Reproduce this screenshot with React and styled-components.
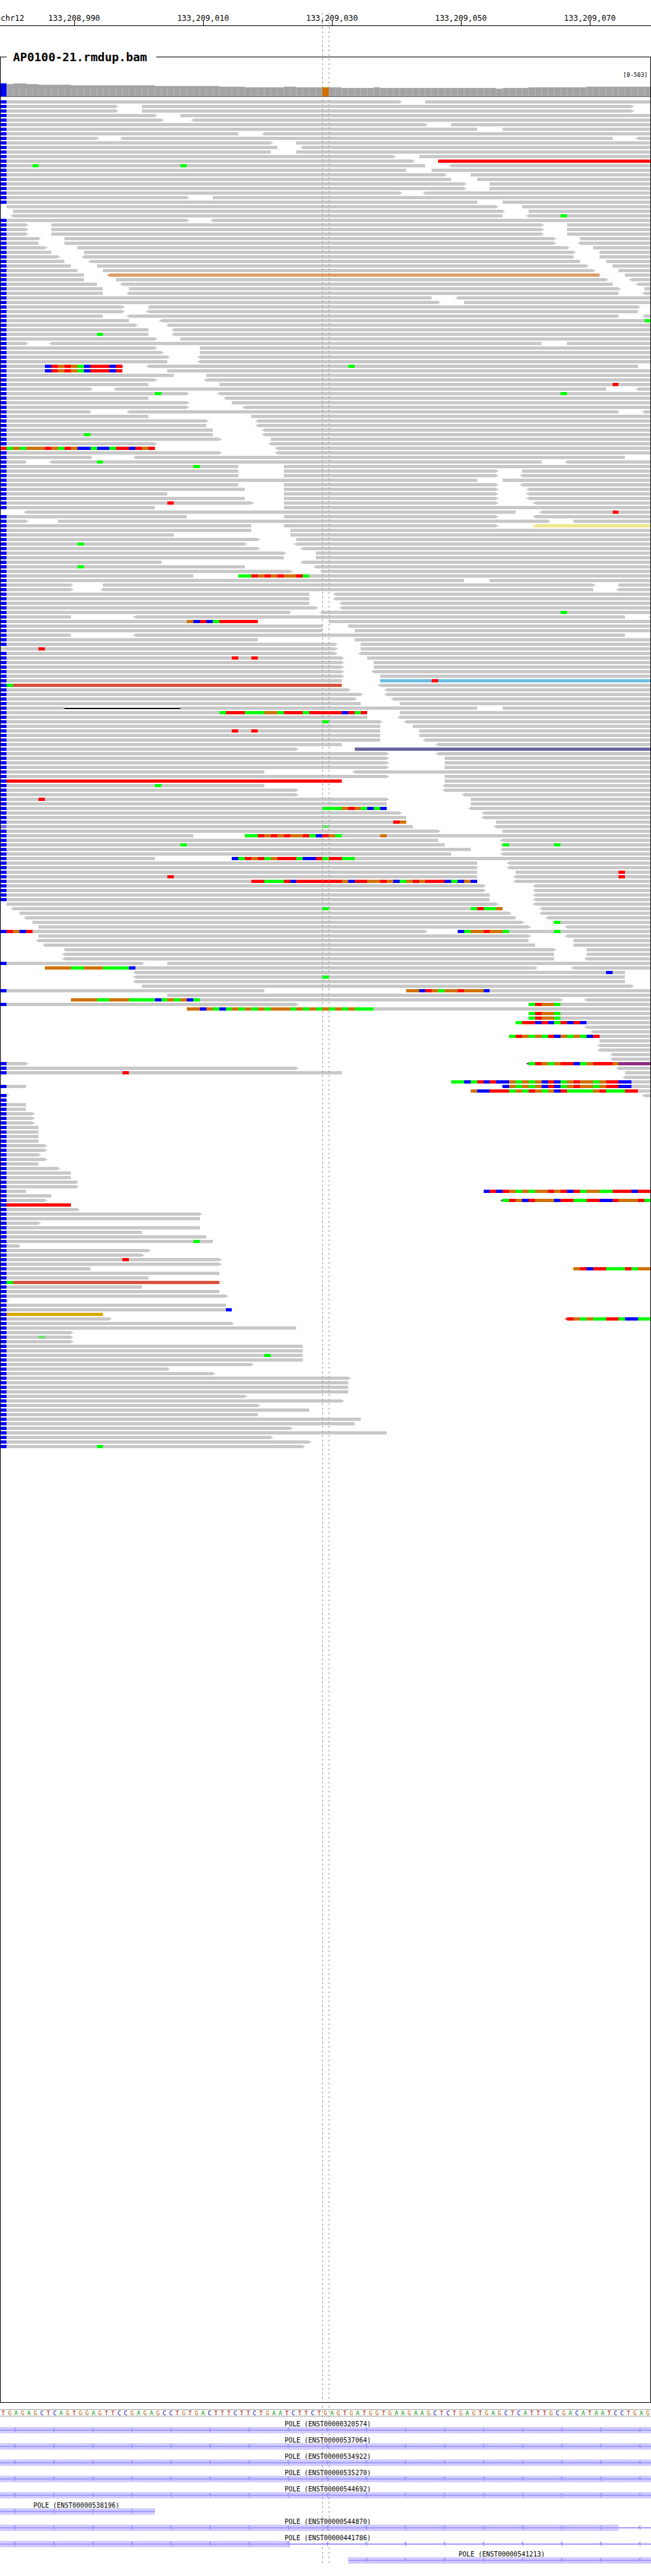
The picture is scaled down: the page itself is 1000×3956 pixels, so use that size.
import React from "react";
import styled, { createGlobalStyle } from "styled-components";

const BASES = 101;
const ROW = 7;
const ROW_CAPACITY = 505;
const pct = (base) => `${(base / BASES) * 100}%`;

const SEQUENCE =
  "TGAGAGCTCAGTGGAGTTCCGAGAGCCTGTGACTTTCTTCTGAATCTTCTGAGTGATGGTGAAGAAGCTCTGAGTGAGCTCATTTGCGACATAATCCTGAG";

const MISMATCH = { A: "#00ff00", C: "#0000ff", G: "#d17105", T: "#ff0000" };
const LETTER = { A: "#009600", C: "#0000b0", G: "#b06000", T: "#b00000" };
const PAIR = {
  red: "#ff0000",
  tan: "#dc9e68",
  yellow: "#f0e68c",
  sky: "#6bbde3",
  rust: "#d9513a",
  indigo: "#66669f",
  purple: "#8c2d82",
  gold: "#d9a900",
};

// One line per row. "a-b" is a read from base a to base b (b empty: to the edge),
// "<" and ">" are strand arrows, "C" in front means a C mismatch at base 0,
// "#name" colours the read, "@nXYZ" lists mismatches, "~" makes them faint.
const READS = `C62> 66-
C18> 22-98>
C18> 22-98>
C24> 28-
C25> <30-
C66> 70-
C74 78-
C37 <41-
C15> <19-95 <99-
C42> 46-
C43 <47-
C42 46-
C61> 65-
C64> 68-#red
C66 <70- @5A @28A
C63 67-
C69> 73-
C70 74-
C72> 76-
C72> 76-
C62> <66-
C29> 33-
C74 78-
1-77> 81-
2-78> 82-
<2-78 <82- @87A
C29> <33-
C4> 8-84> 88-
C4> 8-84> 88-
C4> 8-84> 88-
C6> 10-86> 90-
C6 10-86> <90-
C7> 12-88> 92-
C8 13-89> 93-
C9> <13-89 93-
C10 <14-90 94-
C11 15-91> 95-
C12 16-92> 96-
C13 <17-93#tan 97-
C13 18-94> <98-
C15 <19-95 <99-
C16 20-96> 100-
C16 <20-96 <100-
C67 <71-
C68> 72-
C19> 23-99>
C19> <23-99
C16 <20-96 <100-
C20 <25- @100A
C21> 26-
C23 <27-
C23 <27- @15A
C24> 28-
C4> <8-84 88-
C24> 31-
C25> 31-
C26> <31-
C26 <31-
C19> <23-99 @7CTGTGACTTTCT @54A
C19 26- @7CTGTGACTTTCT
C27 32-
C24> <32-
C23 34- @95T
C14> <18-94 <99-
C29> <34- @24A @87A
C23 <35-
C29> 36-
C29> <38-
C14 <20-96 <100-
C23 39-
C32> <40-
C32 <40-
C33 <41-
C33 <41- @13A
C34> 42-
C24> <42-
0-24 <43- @0TAGAGGGTGATGCCACCATTCTGT
C34> <43-
C14> <21-97
C4 <8-84 <88- @15A
C37 44- @30A
C37 44-77> 81-
C37 44-77> <81-
C74 78-
C37 44-77> <81-
C38 44-77> <82-
C26 44-77> <82-
C38 44-77> <82-
C39> 44-77> <83- @26T
C24 44-
<4-80 <84- @95T
C29 44-77> <83-
C4> 9-85> 89-
C39 44-77> <83-#yellow
C39 45-
C27 45-
C40> 46-
C38> <46- @12A
C40> <47-
C44> 49-
C44 49-
C25 <47-
C38 <49- @12A
C45> <50-
C30 37- @37AATGTGTGGTA
C72 76-
C11> 16-92> 96-
C11> <16-92 <96-
C48 <52-
C48 <52-
C48 <53-
C49> <53-
C45 <50- @87A
C11 <21-97 <101-
C40 51- @29GCTCATTTTTT
C50 54-
C50 55-
C11 <21-97
C40 55-
C52> 56-
0-52> 56- @6T
C52> <56-
C53> 57- @36T @39T
C53> 58-
C53> 58-
C53> <58-
C53> 59-
C53 59-#sky @67T
C53#rust <59- @1A
C54> <60-
C56> <60-
C55> <61-
C56 62-
C10 28-74 78- =10-28
C57 62- @34ATTTAAAGGATTTATTTTTCTAT
C57 <62-
C59> <63- @50A
C59 64-
C59 65- @36T @39T
C59 65-
C59 <66-
C53 <68-
C46> 55-#indigo
C60> <68-
C60> 69-
C60> 69-
C60> 69-
C41 <55-
C60> 69-
C53#red 69-
C41 <69- @24A
C46> <69-
C46> <72-
C60> 73- @6T
C60 73-
C60 <73- @50AAAGTGACAC
C62> <75-
C63 <75-
C63 77- @61TG
0-64 <77- ~0C ~50A
C68> 78-
C30 38- @38AATGTGTGGTACTGA @59G
C68 <78-
C69 <78- @28A @78A @86A
C73 <78-
C70 <78-
C24 36- @36CATGTAGTTTACCTATTAA
C74 <79-
C74 <79-
C74 80- @96T
C74 <80- @26T @96T
C74 <80- @39TTAAATCTTTTTTTGCTTGGTGCAGTGTTTCACGC
C75> <83-
C75> <83-
C76 <83-
C76 <83-
1-77> <83-
<2-78 <84- @50A @73ATAAG
3-79> <84-
<4-80 <85-
5-81> <86- @86A
6-82> <88-
C66> 71- @1TGCT @71CAGGTGGA @86A
6-82> <88-
<6-82 89-
<7-83 89-
10-86> 91-
<10-86 91-
<10-86 <91-
C22> 26-
7-83> <89- @7GGGGAAGGGAAAAC
<21-97 @94C
<21-97 @50A
<21-97
22-98>
C41 63- @63GGCTGAGGTGGGC
26-
11-87> <91- @11GGGGAAGGGAAAACAGAGCA
C46> 82- @82ATGGA
29- @29GGCGACAGAGAGAGGGAGAGAGAGAGAAA
82- @82ATGGA
<82- @82ATGGA
80- @80ATTCTCATCTC
<91-
<92-
79- @79ATGAGATCGAGACT
93-
<93-
<93-
<95-
<95-
C4> <82-#purple @82ATGAGTTCAGTTTG
C46> <96-
C53 97- @19T
<97-
70- @70AACATCTCCGAGAGCTCAGTGGAGTTCC
C4 <78- @78CGAGAGCTCAGTGGAGTTCC
73- @73GCCTTTAGATGAGCTAAAAGTAAATT
C1> <100-
C1
C4
C4
C5>
C5>
C5>
C6
C6
C6
C6
C7>
C7>
C6>
C7>
C6
C9>
C11
C11
C12
C12
C4 75- @75CTCTGAGAGGTGTCTAGGAATTTCTT
C8
C7> <78-#indigo @78ATGCTGGGCTTAATTCCTGGGTA
C11#red
C12>
C31>
C31
C6>
C31
C22
C32
C33 @30A
C3
C23>
C22>
C34> @19T
C34>
C14 <89-#yellow @89GTCTTAAATAGG
C34
C23
C34#rust @1A
C22
C34
C35>
C1>
C35
C36 @35C
C16#gold
C17> <88-#rust @88TGAGAATTACCAA
C36>
C46
C11>
C11> ~6A
C11>
C47
C47
C47 @41A
C47
C39>
C26>
C33>
C54>
C54
C54
C54
C38>
C53>
C40>
C48
C40
C56
C55
C45>
C60
C42>
C48>
C47> @15A`.split("\n");

// [first base, height of the column in px]
const COVERAGE_STEPS = [
  [0, 20], [1, 19], [2, 20], [4, 19], [6, 18], [11, 17], [24, 16], [34, 15],
  [38, 14], [44, 15], [46, 14], [53, 13], [58, 14], [59, 13], [77, 12],
  [78, 13], [82, 14], [91, 15], [101, 0],
];

const GENES = [
  { id: "ENST00000320574", to: 101, exonTo: 101 },
  { id: "ENST00000537064", to: 101, exonTo: 101 },
  { id: "ENST00000534922", to: 101, exonTo: 101 },
  { id: "ENST00000535270", to: 101, exonTo: 101 },
  { id: "ENST00000544692", to: 101, exonTo: 101 },
  { id: "ENST00000538196", to: 24, exonTo: 24, labelTo: 23 },
  { id: "ENST00000544870", to: 101, exonTo: 96 },
  { id: "ENST00000441786", to: 101, exonTo: 45 },
  { id: "ENST00000541213", from: 54, to: 101, exonTo: 101 },
];

const TICKS = [
  [11, "133,208,990"],
  [31, "133,209,010"],
  [51, "133,209,030"],
  [71, "133,209,050"],
  [91, "133,209,070"],
];

const GlobalStyle = createGlobalStyle`
  body {
    margin: 0;
    background: #ffffff;
    color: #000000;
    font-family: "DejaVu Sans Mono", monospace;
  }
`;

const Browser = styled.main`
  position: relative;
  padding: 20px 0;
`;

const Guide = styled.div`
  position: absolute;
  top: 20px;
  bottom: 20px;
  left: ${(p) => pct(p.$base)};
  width: 1px;
  z-index: 1;
  background: repeating-linear-gradient(to bottom, #969696 0 3px, transparent 3px 7px);
`;

const Ruler = styled.header`
  display: grid;
  grid-template-columns: repeat(${BASES}, minmax(0, 1fr));
  height: 19px;
  margin-bottom: 39px;
  border-bottom: 1px solid #000000;
  font-size: 12px;
  line-height: 16px;
  white-space: nowrap;
`;

const Chromosome = styled.span`
  grid-area: 1 / 1;
  padding-left: 1px;
`;

const Tick = styled.span`
  grid-area: 1 / ${(p) => p.$base + 1};
  position: relative;
  display: flex;
  justify-content: center;

  &::after {
    content: "";
    position: absolute;
    top: 11px;
    bottom: 0;
    left: 50%;
    width: 1px;
    background: #000000;
  }
`;

const Track = styled.fieldset`
  min-width: 0;
  margin: 0 0 10px;
  padding: 0;
  border: 1px solid #000000;
`;

const TrackTitle = styled.legend`
  margin-left: 9px;
  padding: 0 11px 0 10px;
  min-width: 209px;
  font-size: 18px;
  line-height: 17px;
  font-weight: bold;
`;

const Range = styled.div`
  padding: 13px 4px 0 0;
  text-align: right;
  font-size: 9px;
  line-height: 12px;
`;

const Clip = styled.div`
  position: relative;
  z-index: ${(p) => (p.$above ? 2 : 0)};
  overflow: hidden;
`;

const Plot = styled.svg`
  display: block;
  width: calc(100% + 2px);
  height: ${(p) => p.$height}px;
  margin: 0 -1px ${(p) => p.$gap || 0}px;
  shape-rendering: crispEdges;
`;

const Sequence = styled.div`
  display: grid;
  grid-template-columns: repeat(${BASES}, minmax(0, 1fr));
  margin-bottom: 1px;
  padding-top: 1px;
  border: solid #a0a0a0;
  border-width: 1px 0;
  font-size: 9px;
  line-height: 8px;
  text-align: center;
`;

const Base = styled.span`
  color: ${(p) => LETTER[p.$letter]};
`;

const Genes = styled.section`
  display: grid;
  grid-auto-rows: 25px;
  margin-bottom: -1px;
`;

const GeneLabel = styled.div`
  margin-left: ${(p) => pct(p.$from)};
  width: ${(p) => pct(p.$to - p.$from)};
  box-sizing: border-box;
  padding: 6px 0 0 7px;
  font-size: 10px;
  line-height: 9px;
  text-align: center;
`;

const GenePlot = styled.svg`
  display: block;
  width: 100%;
  height: 10px;
  shape-rendering: crispEdges;
`;

function parseRow(line) {
  const row = { reads: [], marks: [], gap: null };
  line.split(" ").forEach((token) => {
    const mark = token.match(/^([@~])(\d+)([ACGT]+)$/);
    if (mark) {
      const opacity = mark[1] === "~" ? 0.45 : 1;
      const letters = mark[3].match(/(.)\1*/g);
      let at = Number(mark[2]);
      letters.forEach((run) => {
        row.marks.push({ at, size: run.length, letter: run[0], opacity });
        at += run.length;
      });
      return;
    }
    const gap = token.match(/^=(\d+)-(\d+)$/);
    if (gap) {
      row.gap = [Number(gap[1]), Number(gap[2])];
      return;
    }
    const read = token.match(/^(<?)(?:C|(\d+)-)(\d*)(>?)(?:#(\w+))?$/);
    const from = read[2] === undefined ? 0 : Number(read[2]);
    if (read[2] === undefined) {
      row.marks.push({ at: 0, size: 1, letter: "C", opacity: 1 });
    }
    row.reads.push({
      from,
      to: read[3] === "" ? BASES : Number(read[3]),
      reverse: read[1] === "<",
      forward: read[4] === ">",
      fill: PAIR[read[5]] || "#c8c8c8",
    });
  });
  return row;
}

function ReadRow({ line, y }) {
  const { reads, marks, gap } = parseRow(line);
  return (
    <g>
      {reads.map((r, i) => (
        <React.Fragment key={i}>
          <rect x={pct(r.from)} y={y} width={pct(r.to - r.from)} height="5" fill={r.fill} />
          {r.reverse && <use href="#reverse" x={pct(r.from)} y={y} fill={r.fill} />}
          {r.forward && <use href="#forward" x={pct(r.to)} y={y} fill={r.fill} />}
        </React.Fragment>
      ))}
      {gap && <rect x={pct(gap[0])} y={y + 2} width={pct(gap[1] - gap[0])} height="2" />}
      {marks.map((m, i) => (
        <rect
          key={i}
          x={pct(m.at)}
          y={y}
          width={pct(m.size)}
          height="5"
          fill={MISMATCH[m.letter]}
          opacity={m.opacity}
        />
      ))}
    </g>
  );
}

function Coverage() {
  const height = 28;
  const floor = height - 1;
  return (
    <Plot $height={height} $gap={5} role="img" aria-label="Read coverage">
      {COVERAGE_STEPS.slice(0, -1).map(([from, h], i) => {
        const to = COVERAGE_STEPS[i + 1][0];
        return (
          <React.Fragment key={from}>
            <rect x={pct(from)} y={floor - h} width={pct(to - from)} height={h} fill="#a3a3a3" />
            <rect x={pct(from)} y={floor - h} width={pct(to - from)} height="1" fill="#b0b0b0" />
          </React.Fragment>
        );
      })}
      {Array.from({ length: BASES - 1 }, (_, i) => (
        <line key={i} x1={pct(i + 1)} x2={pct(i + 1)} y1="15" y2={floor} stroke="#b0b0b0" strokeWidth="2" />
      ))}
      <rect x="0" y="7" width={pct(1)} height="20" fill={MISMATCH.C} />
      <rect x={pct(50)} y="13" width={pct(1)} height="14" fill={MISMATCH.G} />
      <rect x={pct(50.4)} y="13" width={pct(0.2)} height="1" fill={MISMATCH.A} />
      <rect x="0" y={floor} width="100%" height="1" fill="#707070" />
    </Plot>
  );
}

function Gene({ id, from = 0, to, exonTo, labelTo = to }) {
  return (
    <div>
      <GeneLabel $from={from} $to={labelTo}>
        POLE ({id})
      </GeneLabel>
      <GenePlot aria-hidden="true">
        <rect x={pct(from)} y="0" width={pct(exonTo - from)} height="10" fill="#d3ccff" />
        <rect x={pct(from)} y="4" width={pct(to - from)} height="2" fill="#9f9bff" />
        <rect x={pct(from)} y="0" width={pct(to - from)} height="10" fill="url(#strand)" />
      </GenePlot>
    </div>
  );
}

export default function App() {
  return (
    <Browser>
      <GlobalStyle />
      <Guide $base={50} />
      <Guide $base={51} />
      <Ruler>
        <Chromosome>chr12</Chromosome>
        {TICKS.map(([base, label]) => (
          <Tick key={base} $base={base}>
            {label}
          </Tick>
        ))}
      </Ruler>
      <Track>
        <TrackTitle>AP0100-21.rmdup.bam</TrackTitle>
        <Range>[0-503]</Range>
        <Clip $above>
          <Coverage />
        </Clip>
        <Clip>
          <Plot $height={ROW_CAPACITY * ROW} role="img" aria-label="Aligned reads">
            <defs>
              <path id="forward" d="M0 1h2v1h2v1h-2v1h-2z" />
              <path id="reverse" d="M0 1h-2v1h-2v1h2v1h2z" />
              <pattern id="strand" patternUnits="userSpaceOnUse" width="60" height="10">
                <path d="M24 1v7h-1v-1h-1v-1h-1v-3h1v-1h1v-1z" fill="#9f9bff" />
              </pattern>
            </defs>
            {READS.map((line, i) => (
              <ReadRow key={i} line={line} y={i * ROW} />
            ))}
          </Plot>
        </Clip>
      </Track>
      <Sequence>
        {SEQUENCE.split("").map((letter, i) => (
          <Base key={i} $letter={letter}>
            {letter}
          </Base>
        ))}
      </Sequence>
      <Genes>
        {GENES.map((gene) => (
          <Gene key={gene.id} {...gene} />
        ))}
      </Genes>
    </Browser>
  );
}
